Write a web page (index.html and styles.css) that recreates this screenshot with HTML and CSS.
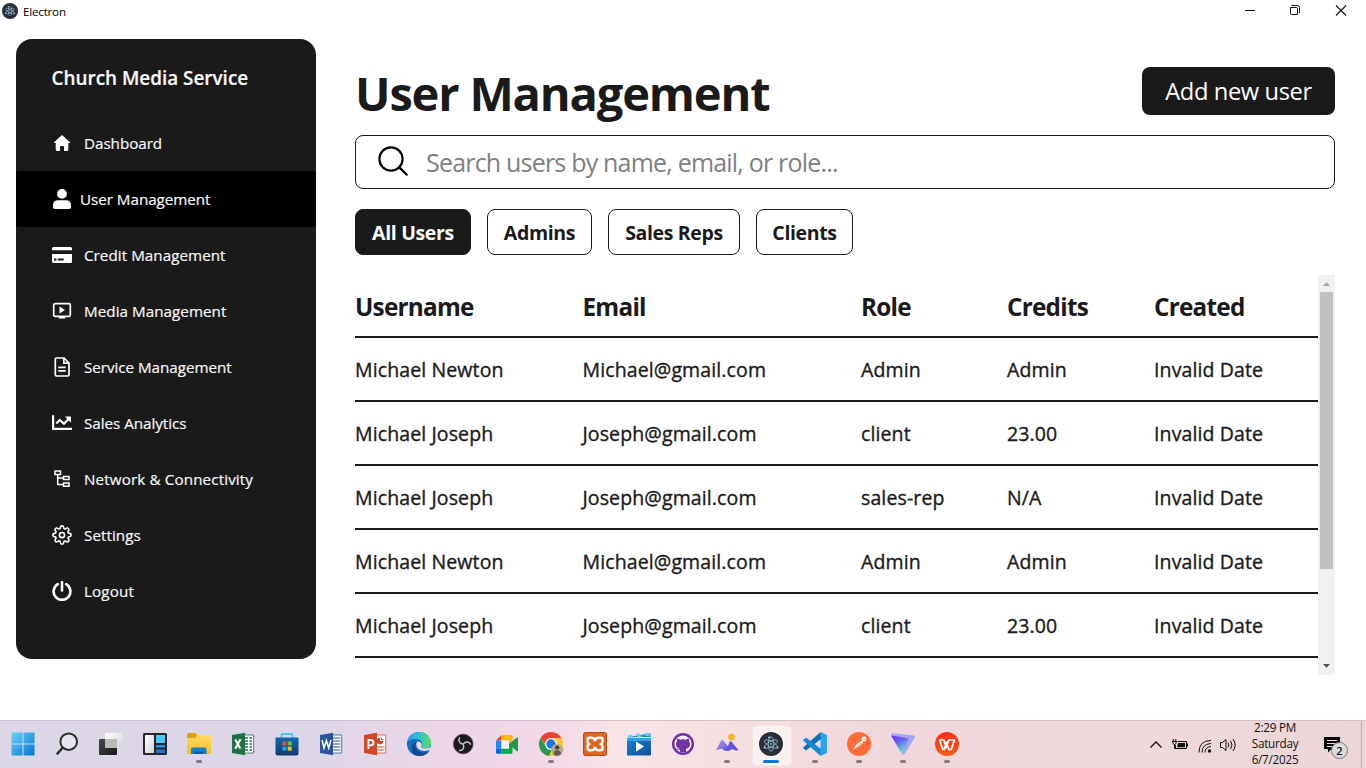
FILE: index.html
```html
<!DOCTYPE html>
<html lang="en">
<head>
<meta charset="utf-8">
<title>Electron</title>
<link rel="stylesheet" href="styles.css">
</head>
<body>
<svg class="defs" width="0" height="0">
  <defs>
    <linearGradient id="g-win" x1="0" y1="0" x2="1" y2="1"><stop offset="0" stop-color="#6bd4fb"/><stop offset="1" stop-color="#0072d2"/></linearGradient>
    <linearGradient id="g-tv" x1="0" y1="0" x2="1" y2="1"><stop offset="0" stop-color="#fff"/><stop offset="1" stop-color="#d2d2d2"/></linearGradient>
    <linearGradient id="g-dark" x1="0" y1="0" x2="1" y2="1"><stop offset="0" stop-color="#4a4a4a"/><stop offset="1" stop-color="#181818"/></linearGradient>
    <linearGradient id="g-fold" x1="0" y1="0" x2="0" y2="1"><stop offset="0" stop-color="#ffdc65"/><stop offset="1" stop-color="#f8bb23"/></linearGradient>
    <linearGradient id="g-store" x1="0" y1="0" x2="0" y2="1"><stop offset="0" stop-color="#1069b5"/><stop offset="1" stop-color="#143a68"/></linearGradient>
    <linearGradient id="g-edge" x1="0" y1="0" x2="1" y2="0"><stop offset="0" stop-color="#2a9fe0"/><stop offset=".5" stop-color="#2fc3d6"/><stop offset="1" stop-color="#64dc58"/></linearGradient>
    <linearGradient id="g-film" x1="0" y1="0" x2="1" y2="1"><stop offset="0" stop-color="#1581d4"/><stop offset="1" stop-color="#0f4f97"/></linearGradient>
    <linearGradient id="g-mt" x1="0" y1="0" x2="1" y2="1"><stop offset="0" stop-color="#b0a3f4"/><stop offset="1" stop-color="#604bd8"/></linearGradient>
    <linearGradient id="g-vpn" x1="0" y1="0" x2=".6" y2="1"><stop offset="0" stop-color="#5b2cf0"/><stop offset=".5" stop-color="#6b69f0"/><stop offset="1" stop-color="#5ff0d0"/></linearGradient>
    <linearGradient id="g-wps" x1="0" y1="0" x2="0" y2="1"><stop offset="0" stop-color="#fa2b1c"/><stop offset="1" stop-color="#ff5a10"/></linearGradient>
    <symbol id="electron" viewBox="0 0 24 24">
      <circle cx="12" cy="12" r="12" fill="#2b2e3a"/>
      <g fill="none" stroke="#a2d5dc" stroke-width=".7">
        <ellipse cx="12" cy="12" rx="7.200" ry="2.700" transform="rotate(28 12 12)"/>
        <ellipse cx="12" cy="12" rx="7.200" ry="2.700" transform="rotate(90 12 12)"/>
        <ellipse cx="12" cy="12" rx="7.200" ry="2.700" transform="rotate(152 12 12)"/>
      </g>
      <g fill="#a2d5dc"><circle cx="12" cy="12" r=".9"/><circle cx="10" cy="5.500" r=".9"/><circle cx="5.600" cy="15.600" r="1"/><circle cx="18.500" cy="15.600" r="1"/></g>
    </symbol>
  </defs>
</svg>

<header class="titlebar">
  <svg class="app-icon" width="16" height="16"><use href="#electron"/></svg>
  <span class="app-name">Electron</span>
  <div class="window-controls">
    <svg width="46" height="22" viewBox="0 0 46 22"><path d="M19 10.500h10" stroke="#111" fill="none"/></svg>
    <svg width="46" height="22" viewBox="0 0 46 22"><path d="M19.500 7.500h6q1 0 1 1v6h-6q-1 0-1-1v-6zM20.500 5.500h6q2 0 2 2v5.500" transform="translate(-1 0)" stroke="#111" fill="none"/></svg>
    <svg width="46" height="22" viewBox="0 0 46 22"><path d="M18 5.500l10 10M28 5.500l-10 10" stroke="#111" fill="none" stroke-width="1.100"/></svg>
  </div>
</header>

<div class="app">
  <nav class="sidebar">
    <h2 class="brand">Church Media Service</h2>
    <a class="nav-item"><svg class="nav-icon" viewBox="0 0 20 20"><path d="M10 2.100 18 9.300q.5.700-.3.700H16.300V16.600q0 1.300-1.300 1.300H12V13.800q0-.8-.8-.8H8.800q-.8 0-.8.8V17.900H5Q3.700 17.900 3.700 16.600V10H2.300q-.8 0-.3-.7Z" fill="#fff"/></svg><span>Dashboard</span></a>
    <a class="nav-item active"><svg class="nav-icon" viewBox="0 0 20 20"><circle cx="10" cy="4.900" r="4.900" fill="#fff"/><path d="M1 18.200V16.500Q1 11.300 6 11.300H14Q19 11.300 19 16.500V18.200Q19 20 17.200 20H2.800Q1 20 1 18.200Z" fill="#fff"/></svg><span>User Management</span></a>
    <a class="nav-item"><svg class="nav-icon" viewBox="0 0 20 20"><path d="M1.500 2h17Q20 2 20 3.500V5.200H0V3.500Q0 2 1.500 2Z" fill="#fff"/><path fill-rule="evenodd" d="M0 9H20V16.500Q20 18 18.500 18H1.500Q0 18 0 16.500ZM2 13.500v2h2.500v-2ZM5.700 13.500v2h6v-2Z" fill="#fff"/></svg><span class="wide">Credit Management</span></a>
    <a class="nav-item"><svg class="nav-icon" viewBox="0 0 20 20"><rect x="1.700" y="2.700" width="16.600" height="12.600" rx="1.300" fill="none" stroke="#fff" stroke-width="1.700"/><path d="M7.500 5.500v7l5.500-3.500zM6.700 15h6.600v2.500H6.700z" fill="#fff"/></svg><span class="wide">Media Management</span></a>
    <a class="nav-item"><svg class="nav-icon" viewBox="0 0 20 20"><path d="M4.500 1H12L17 6V17.700Q17 19 15.700 19H4.500Q3.300 19 3.300 17.700V2.300Q3.300 1 4.500 1ZM11.800 1.200V6.200H16.800M6.300 10.300h7.400M6.300 13.800h7.400" fill="none" stroke="#fff" stroke-width="1.700"/></svg><span>Service Management</span></a>
    <a class="nav-item"><svg class="nav-icon" viewBox="0 0 20 20"><path d="M1.100 2.200V15.900H20" fill="none" stroke="#fff" stroke-width="2.200"/><path d="M4.300 10.500 7.700 7 12 10.700 16.300 6.200" fill="none" stroke="#fff" stroke-width="2.200"/><path d="M12.800 3.500H19V9.700Z" fill="#fff"/></svg><span>Sales Analytics</span></a>
    <a class="nav-item"><svg class="nav-icon" viewBox="0 0 20 20"><g fill="none" stroke="#fff" stroke-width="1.500"><rect x="3" y="2" width="5.500" height="3.500"/><rect x="11.500" y="7.500" width="5.500" height="3"/><rect x="11.500" y="14" width="5.500" height="3.200"/><path d="M5.700 5.500V15.500H11.500M5.700 9H11.500"/></g></svg><span class="wider">Network &amp; Connectivity</span></a>
    <a class="nav-item"><svg class="nav-icon" viewBox="0 0 24 24"><g fill="none" stroke="#fff" stroke-width="1.900" stroke-linejoin="round"><circle cx="12" cy="12" r="3.100"/><path d="M19.400 15a1.650 1.650 0 0 0 .33 1.820l.06.060a2 2 0 1 1-2.830 2.830l-.06-.06a1.650 1.650 0 0 0-2.800 1.180V21a2 2 0 0 1-4 0v-.09A1.650 1.650 0 0 0 7.100 19.730l-.06.060a2 2 0 1 1-2.830-2.830l.06-.06A1.650 1.650 0 0 0 3.090 14H3a2 2 0 0 1 0-4h.09A1.650 1.650 0 0 0 4.270 7.100l-.06-.06a2 2 0 1 1 2.830-2.830l.06.06A1.650 1.650 0 0 0 10 3.090V3a2 2 0 0 1 4 0v.09a1.650 1.650 0 0 0 2.800 1.180l.06-.06a2 2 0 1 1 2.830 2.830l-.06.06A1.650 1.650 0 0 0 20.910 10H21a2 2 0 0 1 0 4h-.09a1.650 1.650 0 0 0-1.510 1z"/></g></svg><span class="wide">Settings</span></a>
    <a class="nav-item"><svg class="nav-icon" viewBox="0 0 20 20"><path d="M5.800 3.200A8.400 8.400 0 1 0 14.200 3.200" fill="none" stroke="#fff" stroke-width="2.600" stroke-linecap="round"/><path d="M10 1.200V9.500" stroke="#fff" stroke-width="2.600" stroke-linecap="round"/></svg><span class="wider">Logout</span></a>
  </nav>

  <main class="content">
    <div class="page-head">
      <h1 class="page-title">User Management</h1>
      <button class="add-button"><span>Add new user</span></button>
    </div>
    <div class="search">
      <svg class="search-icon" width="32" height="32" viewBox="0 0 32 32" fill="none" stroke="#000" stroke-width="2.200" stroke-linecap="round"><circle cx="14" cy="14" r="11.600"/><path d="M22.400 22.400 29.700 29.700"/></svg>
      <span class="placeholder">Search users by name, email, or role...</span>
    </div>
    <div class="filters">
      <button class="chip selected chip-all"><span>All Users</span></button>
      <button class="chip chip-admins"><span>Admins</span></button>
      <button class="chip chip-reps"><span>Sales Reps</span></button>
      <button class="chip chip-clients"><span>Clients</span></button>
    </div>
    <div class="table-wrap">
      <div class="table">
        <div class="row head"><span>Username</span><span>Email</span><span>Role</span><span>Credits</span><span>Created</span></div>
        <div class="row"><span>Michael Newton</span><span>Michael@gmail.com</span><span>Admin</span><span>Admin</span><span>Invalid Date</span></div>
        <div class="row"><span>Michael Joseph</span><span>Joseph@gmail.com</span><span>client</span><span>23.00</span><span>Invalid Date</span></div>
        <div class="row"><span>Michael Joseph</span><span>Joseph@gmail.com</span><span>sales-rep</span><span>N/A</span><span>Invalid Date</span></div>
        <div class="row"><span>Michael Newton</span><span>Michael@gmail.com</span><span>Admin</span><span>Admin</span><span>Invalid Date</span></div>
        <div class="row"><span>Michael Joseph</span><span>Joseph@gmail.com</span><span>client</span><span>23.00</span><span>Invalid Date</span></div>
      </div>
      <div class="scrollbar">
        <svg width="17" height="17" viewBox="0 0 17 17"><path d="M5 11h7L8.500 7.200z" fill="#a3a3a3"/></svg>
        <div class="thumb"></div>
        <svg class="down" width="17" height="17" viewBox="0 0 17 17"><path d="M5 6h7L8.500 9.800z" fill="#505050"/></svg>
      </div>
    </div>
  </main>
</div>

<footer class="taskbar">
  <div class="tasks">
    <div class="task"><svg viewBox="0 0 24 24"><path d="M.5.500h11v11H.5zM12.500.500h11v11h-11zM.5 12.500h11v11H.5zM12.500 12.500h11v11h-11z" fill="url(#g-win)"/></svg></div>
    <div class="task"><svg viewBox="0 0 24 24"><circle cx="13.700" cy="9.700" r="8.300" fill="#e9e5ef" stroke="#2b2b2b" stroke-width="2"/><path d="M7.500 16 2.500 21.500" stroke="#2b2b2b" stroke-width="2.600" stroke-linecap="round"/></svg></div>
    <div class="task"><svg viewBox="0 0 24 24"><rect x="0" y="7" width="18" height="16" rx="1" fill="url(#g-dark)"/><rect x="6" y="1" width="18" height="15" rx="1" fill="url(#g-tv)"/><path d="M6 7h12v9H6z" fill="#bababa"/></svg></div>
    <div class="task"><svg viewBox="0 0 24 24"><rect y="1" width="24" height="22" rx="1.500" fill="#252525"/><rect x="2" y="3" width="9" height="18" rx=".5" fill="url(#g-tv)"/><path d="M13 3h9v8h-9z" fill="#4cc9fa"/><path d="M13 13h9v2.500h-9z" fill="#2497df"/><path d="M13 17.500h9V21h-9z" fill="#1079d8"/></svg></div>
    <div class="task"><svg viewBox="0 0 24 24"><path d="M0 3q0-2 2-2h6.500l2 2v4H0z" fill="#e0a010"/><path d="M0 6h8l2.500-3H22.500Q24 3 24 4.500V20.500Q24 22 22.500 22H1.500Q0 22 0 20.500Z" fill="url(#g-fold)"/><path d="M4 22v-4.500q0-2 2-2h11.500q2 0 2 2V22z" fill="#1380d5"/><path d="M7 19.500h9.500V22H7z" fill="#0c5aa0"/></svg><i class="dot"></i></div>
    <div class="task"><svg viewBox="0 0 24 24"><path d="M13 3h9.700v18H13z" fill="#fff" stroke="#207245" stroke-width=".8"/><path d="M14 6h3M18.500 6H21M14 9h3M18.500 9H21M14 12h3M18.500 12H21M14 15h3M18.500 15H21M14 18h3M18.500 18H21" stroke="#207245" stroke-width="1.700"/><path d="M1 3 14 .800v22.400L1 21z" fill="#207245"/><path d="m4.300 7.500 5 9M9.500 7.300l-5.300 9.500" stroke="#fff" stroke-width="2"/></svg></div>
    <div class="task"><svg viewBox="0 0 24 24"><path d="M6.500 6V3q0-1 1-1h9q1 0 1 1v3" fill="none" stroke="#45c8f5" stroke-width="1.800"/><path d="M.5 5.500h23V21.500q0 2-2 2h-19q-2 0-2-2z" fill="url(#g-store)"/><path d="M7.500 9.500h4v4h-4z" fill="#f05124"/><path d="M12.700 9.500h4v4h-4z" fill="#80bc17"/><path d="M7.500 14.700h4v4h-4z" fill="#13a5ef"/><path d="M12.700 14.700h4v4h-4z" fill="#ffba08"/></svg></div>
    <div class="task"><svg viewBox="0 0 24 24"><path d="M13 3h9.700v18H13z" fill="#fff" stroke="#2a5699" stroke-width=".8"/><path d="M14 6h7.500M14 9h7.500M14 12h7.500M14 15h7.500M14 18h7.500" stroke="#2a5699"/><path d="M1 3 14 .800v22.400L1 21z" fill="#2a5699"/><path d="m3 8 2 8 2.400-7.500L9.700 16l2.200-8" fill="none" stroke="#fff" stroke-width="1.500"/></svg></div>
    <div class="task"><svg viewBox="0 0 24 24"><path d="M13 3h9.700v18H13z" fill="#fff" stroke="#d24726" stroke-width=".8"/><circle cx="17" cy="9" r="3.300" fill="#d24726"/><path d="M17.500 9V5M17.500 8.500H21" stroke="#fff"/><path d="M14 15h7.500M14 18h7.500" stroke="#d24726" stroke-width="1.200"/><path d="M1 3 14 .800v22.400L1 21z" fill="#d24726"/><path d="M5.500 17V8h2q3 0 3 2.700t-3 2.700h-2" fill="none" stroke="#fff" stroke-width="1.900"/></svg></div>
    <div class="task"><svg viewBox="0 0 24 24"><circle cx="12" cy="12" r="12" fill="#0f70c4"/><path d="M.2 10C1.500 3.500 6.500 0 12 0c7 0 12 5 12 10.500 0 3.700-2.600 6-6 6-2.600 0-4.500-1-3.700-2.200 1.700-2.200.8-6.300-4.300-7.200C5.500 6.300 1.500 8 .2 10Z" fill="url(#g-edge)"/><path d="M10.500 9.700C7 12 8 17 11.500 19.300c3.500 2.200 7.300 1.700 11.300-.8-2 3.500-5.800 5.500-10 5.500C7 23.700 4.500 20 4.800 16c.2-3.500 2.500-6 5.700-6.300Z" fill="#114a8b"/><path d="M10.500 9.500c-2.500 2.500-1 7.300 3.500 8.800 3.500 1.200 7 .5 9-.8 1.200-.6.900.5 0 1.500l1-4-5 1.500c-4 .5-5.500-1-4.700-2.200 1-1.800-.3-5-3.800-4.800Z" fill="#ecd7e7"/></svg></div>
    <div class="task"><svg viewBox="0 0 24 24"><circle cx="12.200" cy="12" r="9.800" fill="#1b1b1c" stroke="#4b484c" stroke-width=".8"/><g fill="none" stroke="#c6c6c6" stroke-width="1.400"><path d="M12.200 12.200C8.300 11.700 6.800 8.500 8.800 5.500"/><path d="M12.200 12.200C8.300 11.700 6.800 8.500 8.800 5.500" transform="rotate(120 12.200 12.200)"/><path d="M12.200 12.200C8.300 11.700 6.800 8.500 8.800 5.500" transform="rotate(240 12.200 12.200)"/></g></svg></div>
    <div class="task"><svg viewBox="0 0 24 24"><path d="M1 8.500 6.500 3v5.500z" fill="#ea4335"/><path d="M1 8.500h5.500v8H1z" fill="#2684fc"/><path d="M1 16.500h5.500v5.300H2.500Q1 21.800 1 20.300z" fill="#0066da"/><path d="M6.500 3H16q1.500 0 1.500 1.500v4.500L14 12V8.500H6.500z" fill="#ffba00"/><path d="M6.500 16.500H14V12l3.500-2.800v11q0 1.600-1.500 1.600H6.500z" fill="#00ac47"/><path d="m14 12.300 7.500-6.600q1.500-.9 1.500.8v11.800q0 1.700-1.500.8z" fill="#1f9a48"/><path d="M6.500 8.500H14v8H6.500z" fill="#fbeef6"/></svg></div>
    <div class="task"><svg viewBox="0 0 24 24"><circle cx="12" cy="12" r="12" fill="#fcc934"/><path d="M1.600 6A12 12 0 0 1 22.400 6H12L8 14z" fill="#ea4335"/><path d="M1.600 6 8 16l5 1-3 7A12 12 0 0 1 1.600 6z" fill="#279b50"/><circle cx="12" cy="12" r="5.900" fill="#fff"/><circle cx="12" cy="12" r="4.700" fill="#2474e8"/><circle cx="18.300" cy="18" r="6" fill="#b8a88f"/><path d="M14.500 22.500q.3-4.500 3.500-4.500t4.200 3.500a6 6 0 0 1-7.700 1z" fill="#64584f"/><circle cx="18.200" cy="15.500" r="2.100" fill="#453a34"/></svg><i class="dot"></i></div>
    <div class="task"><svg viewBox="0 0 24 24"><rect x=".5" y=".5" width="23" height="23" rx="2" fill="#df661f" stroke="#b44a13"/><path d="M6.300 5.700h2.500q2 0 2.700 2 .5 1.300 1 0 .7-2 2.700-2h2.500q1.800 0 1.800 2v2q0 1.300-1.500 2.300 1.500 1 1.500 2.300v2q0 2-1.800 2h-2.500q-2 0-2.700-2-.5-1.300-1 0-.7 2-2.700 2H6.300q-1.800 0-1.800-2v-2Q4.500 13 6 12 4.500 11 4.500 9.700v-2q0-2 1.800-2Z" fill="none" stroke="#fff" stroke-width="2.400"/></svg></div>
    <div class="task"><svg viewBox="0 0 24 24"><path d="M0 5 23.500 1.500V5z" fill="#1989d8"/><path d="m1 3 3.500-.5 2 3-5 .5zm8-1 4-.5 2 3.500-4.500.5zm8.500-1 4.500-.3.500 3-3.500.5z" fill="#67d0f8"/><path d="M0 6h24v16.500q0 1-1 1H1q-1 0-1-1z" fill="url(#g-film)"/><path d="M0 6h24v3H0z" fill="#2da1e7"/><path d="M9 9.500v10l8-5z" fill="#fff"/></svg></div>
    <div class="task"><svg viewBox="0 0 24 24"><circle cx="12" cy="12" r="11" fill="#7132a2"/><circle cx="12" cy="12" r="8.600" fill="#f7edfb"/><path d="M9 20.300v-2.400q-2.800.6-3.800-1.800 1.500.5 2 .9 1 .7 2-.1-4.200-.8-4.200-4.900 0-1.600 1-2.700-.4-1.600.3-2.800 1.200 0 2.700 1.200 3-.7 6 0Q16.500 6.500 17.700 6.500q.7 1.200.3 2.800 1 1.100 1 2.700 0 4.100-4.200 4.900.4.700.4 1.500v1.900z" fill="#7132a2"/></svg></div>
    <div class="task"><svg viewBox="0 0 24 24"><path d="M1 18.500 6 8.500q1-1.700 2.300 0L15 17q-4 4-8-.3-2.500.3-6 1.800Z" fill="url(#g-mt)"/><path d="m11 19 3.500-9q.8-1.700 2-.3L23.500 18q-3 1.500-6-1-2 2-6.500 2Z" fill="#6652dc"/><circle cx="16.500" cy="5" r="3.200" fill="#fbb116"/></svg><i class="dot"></i></div>
    <div class="task current"><svg><use href="#electron"/></svg><i class="dot"></i></div>
    <div class="task"><svg viewBox="0 0 24 24"><path d="M17.500 0 24 3v18l-6.500 3z" fill="#27a4ee"/><path d="M17.500 0 18 7 3 18.500.5 16.500Q0 15.800.5 15.200z" fill="#1070b3"/><path d="M17.500 24 18 17 3 5.500.5 7.500Q0 8.200.5 8.800z" fill="#1689d1"/></svg><i class="dot"></i></div>
    <div class="task"><svg viewBox="0 0 24 24"><circle cx="12" cy="12" r="12" fill="#ff6c37"/><circle cx="17" cy="7" r="2.400" fill="#fff"/><path d="m15 8.500 1.500 1.800L11 15l-3 1.200-2.500 2 2-3 2-3z" fill="#fff"/><path d="m10.500 14 3-3M15.500 7l3 .5" stroke="#ff6c37" stroke-width=".7"/></svg><i class="dot"></i></div>
    <div class="task"><svg viewBox="0 0 24 24"><path d="M0 3q0-2 2-1.800L23 3.500q1.700.5.7 2.300L13.500 22q-1.300 1.600-2.500 0z" fill="#a5a4f5"/><path d="M0 3.500 16 6q2 .5 1 2.500L11.700 21.500Q11 22 10.500 21z" fill="url(#g-vpn)"/></svg><i class="dot"></i></div>
    <div class="task"><svg viewBox="0 0 24 24"><circle cx="12" cy="12" r="12" fill="url(#g-wps)"/><path d="M4.500 8h4.300l2.400 7.500L13.700 8h5.800l-3.300 9.500h-2.500L11.200 10l-2 7.500H7.800z" fill="none" stroke="#fff" stroke-width="1.700" stroke-linejoin="round"/></svg><i class="dot"></i></div>
  </div>
  <div class="tray">
    <svg width="12" height="12" viewBox="0 0 12 12"><path d="m.5 8.500 5.500-5.500L11.500 8.500" fill="none" stroke="#111" stroke-width="1.300"/></svg>
    <svg class="battery" width="16" height="16" viewBox="0 0 16 16"><path d="M5.500 4.500h9v7H3.500V8M15.500 6.500v3" fill="none" stroke="#111"/><path d="M6 6h7v4.200H5z" fill="#111"/><path d="M0 4.500h5M1.200 2v2.500M3.800 2v2.500M.7 4.500q0 3 1.800 3t1.800-3M2.500 7v4.500h2" fill="none" stroke="#111"/></svg>
    <svg class="wifi" width="14" height="14" viewBox="0 0 14 14"><g fill="none" stroke="#111"><path d="M1 13.500Q1 1.500 13 1.500"/><path d="M4 13.500Q4 5 13 4.500"/><path d="M7 13.500Q7 8 13 7.500"/></g><circle cx="11.500" cy="12" r="1.700" fill="#111"/></svg>
    <svg class="volume" width="18" height="16" viewBox="0 0 18 16"><g fill="none" stroke="#111"><path d="M1.500 5.500h2L7 2.500v11L3.500 10.500h-2z"/><path d="M9 5.700q1.800 2.300 0 4.600M11.500 3.800q3 4.200 0 8.400M14 2q4.300 6 0 12"/></g></svg>
    <div class="clock"><span>2:29 PM</span><span>Saturday</span><span>6/7/2025</span></div>
    <div class="notify"><svg width="18" height="18" viewBox="0 0 18 18"><path d="M1 1h16v12H8.500L5 16.500V13H1z" fill="#050505"/><path d="M4 4.500h10M4 7.500h10M4 10.500h7" stroke="#ecd8da"/></svg><b class="badge">2</b></div>
    <i class="desktop-edge"></i>
  </div>
</footer>
</body>
</html>
```
FILE: styles.css
```css
* { box-sizing: border-box; }
body {
  margin: 0;
  width: 1366px;
  height: 768px;
  overflow: hidden;
  display: flex;
  flex-direction: column;
  background: #fff;
  color: #1a1a1a;
  font-family: "Open Sans", "Noto Sans", sans-serif;
}
.defs { position: absolute; }
h1, h2 { margin: 0; }
svg { display: block; flex: none; }
button { font: inherit; color: inherit; margin: 0; padding: 0; }
span { white-space: nowrap; }

.titlebar { height: 22px; display: flex; align-items: center; padding: 0 2px; flex: none; }
.app-name { margin-left: 5px; font-size: 11.6px; letter-spacing: -.2px; color: #000; }
.window-controls { margin-left: auto; display: flex; }

.app { height: 698px; display: flex; gap: 39px; padding: 17px 31px 0 16px; flex: none; }
.sidebar {
  width: 300px;
  height: 620px;
  flex: none;
  border-radius: 16px;
  background: #1a1a1a;
  color: #f7f7f7;
  overflow: hidden;
}
.brand { height: 76px; padding: 24px 35.500px 0; font-size: 18.900px; line-height: 30px; font-weight: 600; -webkit-text-stroke: .2px; white-space: nowrap; }
.nav-item { height: 56px; padding: 0 36px; display: flex; align-items: center; gap: 12px; font-size: 15.2px; letter-spacing: -.03px; -webkit-text-stroke: .2px; }
.nav-item .wide { letter-spacing: .05px; }
.nav-item .wider { letter-spacing: .13px; }
.nav-item.active { background: #000; border-radius: 3px; gap: 8px; }
.nav-icon { width: 20px; height: 20px; }

.content { width: 980px; }
.page-head { height: 96px; display: flex; justify-content: space-between; }
.page-title { font-size: 47px; line-height: 60px; padding-top: 24px; font-weight: 700; letter-spacing: -1.150px; white-space: nowrap; }
.add-button { width: 193px; height: 48px; margin-top: 28px; border: 0; border-radius: 8px; background: #1a1a1a; color: #fff; font-size: 23.7px; line-height: 48px; letter-spacing: -.4px; }
.search { height: 54px; border: 1px solid #1a1a1a; border-radius: 8px; display: flex; align-items: center; padding-left: 21px; }
.search-icon { margin-top: -2px; }
.placeholder { margin-left: 17px; color: #808080; font-size: 25px; letter-spacing: -.8px; }
.filters { display: flex; gap: 16px; margin: 20px 0; }
.chip { height: 46px; border: 1px solid #1a1a1a; border-radius: 8px; background: #fff; font-size: 19.5px; font-weight: 700; letter-spacing: -.35px; }
.chip.selected { background: #1a1a1a; color: #fff; }
.chip-all { width: 116px; }
.chip-admins { width: 105px; }
.chip-reps { width: 132px; }
.chip-clients { width: 97px; }

.table-wrap { height: 400px; display: flex; overflow: hidden; }
.table { width: 963px; }
.row {
  display: grid;
  grid-template-columns: 227.500px 278.500px 146px 147px 1fr;
  align-items: center;
  height: 64px;
  border-bottom: 2px solid #1a1a1a;
  font-size: 19.5px;
  letter-spacing: .12px;
  -webkit-text-stroke: .35px;
}
.row.head { height: 63px; padding-top: 2px; font-size: 24.300px; font-weight: 700; letter-spacing: -.75px; -webkit-text-stroke: 0; }
.scrollbar { width: 17px; height: 400px; background: #f1f1f1; display: flex; flex-direction: column; }
.thumb { width: 13px; height: 277px; margin: 0 2px; background: #c1c1c1; }
.down { margin-top: auto; }

.taskbar {
  height: 48px;
  flex: none;
  display: flex;
  justify-content: space-between;
  border-top: 1px solid #cdc2ce;
  background: linear-gradient(90deg, #dcd7e7 0, #dcd6e8 300px, #edd6e7 450px, #f3d8e8 540px, #f8e4e6 620px, #f5dedf 760px, #efd7db 900px, #efd9da 1150px, #ecd5d8 100%);
}
.tasks { display: flex; padding-left: 1px; }
.task { width: 44px; height: 47px; position: relative; padding: 11px 10px; }
.task svg { width: 24px; height: 24px; overflow: visible; }
.dot { position: absolute; left: 19px; top: 39px; width: 6px; height: 3px; border-radius: 2px; background: #85787d; }
.task.current::before { content: ""; position: absolute; left: 3px; top: 4px; width: 38px; height: 39px; border-radius: 4px; background: #fbf1f1; border: 1px solid #f2e4e5; }
.task.current svg { position: relative; }
.task.current .dot { left: 14px; width: 16px; background: #0078d4; }

.tray { display: flex; align-items: center; color: #111; }
.battery { margin-left: 10px; }
.wifi { margin-left: 10px; margin-top: 2px; }
.volume { margin-left: 7px; }
.clock { width: 58px; margin: -3px 0 0 9px; display: flex; flex-direction: column; align-items: center; font-size: 11.700px; line-height: 16px; letter-spacing: -.25px; }
.notify { margin-left: 19px; position: relative; width: 38px; }
.badge { position: absolute; left: 8px; top: 6px; width: 17px; height: 17px; border: 1px solid #77797c; border-radius: 50%; background: #d9dadb; font-size: 11px; line-height: 15px; text-align: center; font-weight: 600; }
.desktop-edge { width: 5px; height: 47px; border-left: 1px solid #bfafb3; }
```
